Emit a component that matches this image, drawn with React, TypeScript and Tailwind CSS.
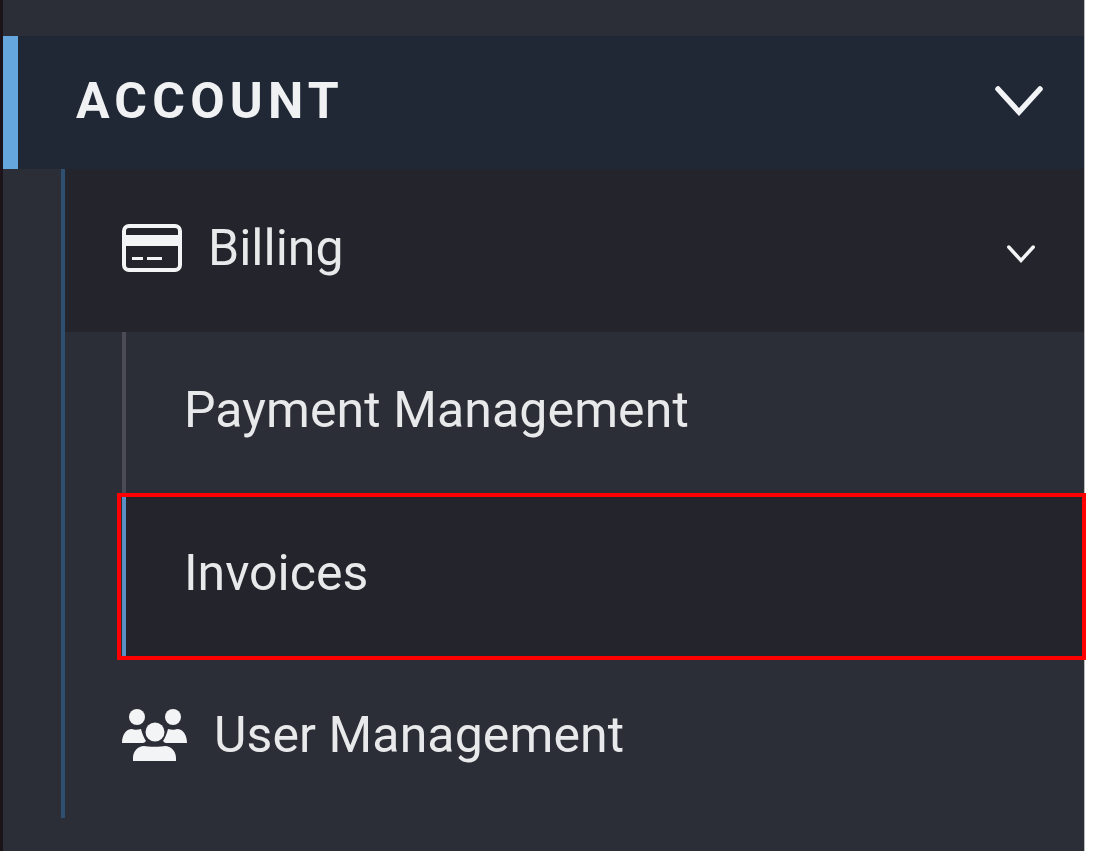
import React from "react";

function Chevron({ className, sw }: { className: string; sw: number }) {
  return (
    <svg viewBox="0 0 48 30" className={className} fill="none" stroke="#f3f4f6" strokeWidth={sw} strokeLinecap="round" strokeLinejoin="miter">
      <polyline points="3,3 24,26 45,3" />
    </svg>
  );
}

function Card() {
  return (
    <svg viewBox="0 0 60 48" className="w-[60px] h-[48px] shrink-0" fill="none">
      <rect x="2" y="2" width="56" height="44" rx="5" stroke="#f3f4f6" strokeWidth="4" />
      <rect x="4" y="11" width="52" height="11" fill="#f3f4f6" />
      <rect x="10" y="33" width="11" height="3" fill="#f3f4f6" />
      <rect x="25" y="33" width="15" height="3" fill="#f3f4f6" />
    </svg>
  );
}

function Users() {
  return (
    <svg viewBox="0 0 65 52" className="w-[65px] h-[52px] shrink-0" fill="#f3f4f6">
      <circle cx="15" cy="8" r="8" />
      <circle cx="51" cy="8" r="8" />
      <circle cx="33" cy="23" r="9.5" />
      <path d="M0 34c0-8 4-14 10-14 2 1 6 1 9 0 1 4 3 9 5 12-1 1-2 2-3 2H0z" />
      <path d="M65 34c0-8-4-14-10-14-2 1-6 1-9 0-1 4-3 9-5 12 1 1 2 2 3 2h21z" />
      <path d="M11 52v-3c0-7 5-12 11-12 3 1 18 1 21 0 6 0 11 5 11 12v3H11z" />
    </svg>
  );
}

export default function App() {
  return (
    <div className="w-[1096px] h-[851px] flex bg-white overflow-hidden font-['Roboto',sans-serif] text-[#e8e9ea]">
      <div className="w-[3px] bg-[#1c1219]" />
      <div className="w-[1081px] bg-[#2c2e37] pt-[36px] flex flex-col">
        <div className="h-[133px] flex items-center bg-[#202836]">
          <div className="w-[15px] h-full bg-[#65a6dd]" />
          <span className="ml-[58px] mb-[4px] text-[50px] font-bold tracking-[5.2px] leading-none text-[#f0f1f2]">ACCOUNT</span>
          <div className="ml-auto mr-[41px] mb-[3px]">
            <Chevron className="w-[48px] h-[30px] block" sw={5.5} />
          </div>
        </div>
        <div className="ml-[58px] w-[1023px] h-[649px] border-l-[4px] border-[#2f4f70] flex flex-col">
          <div className="h-[163px] bg-[#24252c] flex items-center pb-[6px] pl-[57px] pr-[49px]">
            <Card />
            <span className="ml-[26px] text-[50px] font-[450] leading-none">Billing</span>
            <div className="ml-auto mt-[12px]">
              <Chevron className="w-[28px] h-[18px] block" sw={6} />
            </div>
          </div>
          <div className="ml-[57px] flex flex-col">
            <div className="h-[163px] border-l-[4px] border-[#4a4b54] flex items-center pb-[8px] pl-[58px]">
              <span className="text-[50px] font-[450] tracking-[0.1px] leading-none">Payment Management</span>
            </div>
            <div className="relative h-[163px] border-l-[4px] border-[#5a8fc4] bg-[#24252c] flex items-center pb-[8px] pl-[58px]">
              <span className="text-[50px] font-[450] leading-none">Invoices</span>
              <div className="absolute left-[-9px] right-[-2px] top-[-2px] bottom-[-2px] border-[4px] border-[#ff0000]" />
            </div>
          </div>
          <div className="h-[160px] flex items-center pb-[6px] pl-[57px]">
            <Users />
            <span className="ml-[27px] text-[50px] font-[450] tracking-[0.1px] leading-none">User Management</span>
          </div>
        </div>
      </div>
      <div className="w-[1px] bg-[#b9babc]" />
    </div>
  );
}
